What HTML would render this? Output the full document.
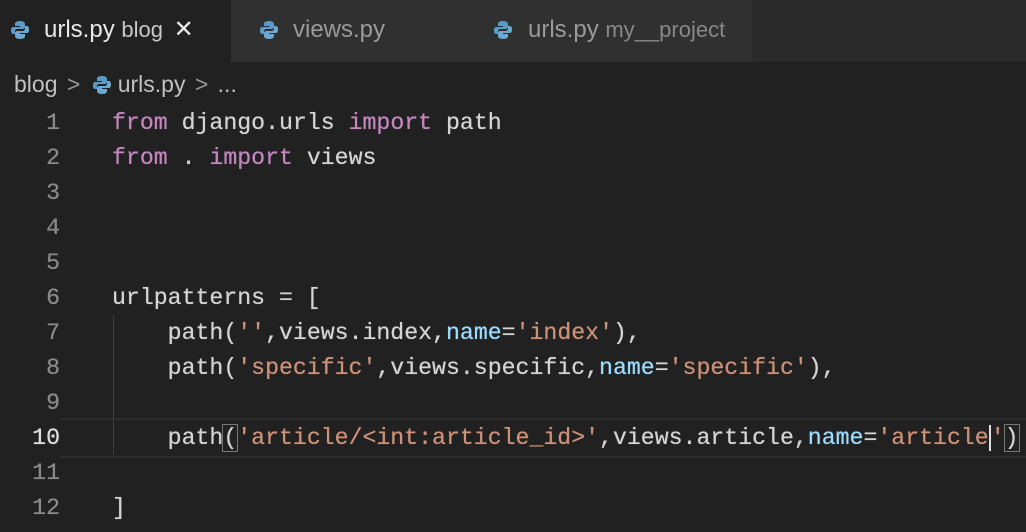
<!DOCTYPE html>
<html><head><style>
body{margin:0;width:1026px;height:532px;background:#212121;overflow:hidden;font-family:"Liberation Sans",sans-serif;position:relative}
.tabs{position:absolute;top:0;left:0;width:1026px;height:62px;background:#2a2a2a}
.tab{position:absolute;top:0;height:62px;background:#303030;color:#9a9a9a;font-size:24px;line-height:60px;border-right:1px solid #272727}
.tab.act{background:#212121;color:#e8e8e8}
.ic{position:absolute;top:20px;width:20px;height:20px}
.crumb{position:absolute;top:66px;left:14px;color:#c0c0c0;font-size:23px;line-height:36px;word-spacing:3px}
.code{position:absolute;top:110px;left:0;font-family:"Liberation Mono",monospace;font-size:23.2px;color:#d4d4d4;text-shadow:0 0 0.6px currentColor}
.ln{position:absolute;left:0;width:60px;text-align:right;color:#8a8a8a}
.l{position:absolute;left:112px;white-space:pre}
.k{color:#c586c0}.s{color:#ce9178}.n{color:#9cdcfe}
.hl{position:absolute;left:60px;top:418px;width:966px;height:36px;border-top:2px solid #2c2c2c;border-bottom:2px solid #2c2c2c}
.guide{position:absolute;left:113px;top:315px;width:1px;height:140px;background:#3e3e3e}
</style></head><body>
<svg width="0" height="0" style="position:absolute"><defs><g id="py"><path d="M10 1C6 1 5 2.5 5 4v2h5v1H3C1.5 7 1 8.5 1 10.5S1.7 14 3 14h2v-2.5C5 10 6 9 7.5 9h5C14 9 15 8 15 6.5V4C15 2.5 13.5 1 10 1z" fill="#5a9bc7"/><path d="M10 19c4 0 5-1.5 5-3v-2h-5v-1h7c1.5 0 2-1.5 2-3.5S18.3 6 17 6h-2v2.5C15 10 14 11 12.5 11h-5C6 11 5 12 5 13.5V16c0 1.5 1.5 3 5 3z" fill="#6aaad3"/></g></defs></svg>
<div class="tabs">
<div class="tab act" style="left:0;width:231px"><svg class="ic" style="left:10px" viewBox="0 0 20 20"><use href="#py"/></svg><span style="position:absolute;left:44px">urls.py <span style="font-size:22px;color:#c8c8c8">blog</span> <span style="font-size:24px;margin-left:4px">✕</span></span></div>
<div class="tab" style="left:231px;width:231px"><svg class="ic" style="left:28px" viewBox="0 0 20 20"><use href="#py"/></svg><span style="position:absolute;left:62px">views.py</span></div>
<div class="tab" style="left:462px;width:290px"><svg class="ic" style="left:31px" viewBox="0 0 20 20"><use href="#py"/></svg><span style="position:absolute;left:66px">urls.py <span style="font-size:22px;color:#888">my__project</span></span></div>
</div>
<div class="crumb">blog <span style="color:#999">&gt;</span> <svg width="20" height="20" viewBox="0 0 20 20" style="vertical-align:-3px;margin:0 6px 0 2px"><use href="#py"/></svg>urls.py <span style="color:#999">&gt;</span> ...</div>
<div class="hl"></div>
<div class="guide"></div>
<div class="code">
<div class="ln" style="top:0">1</div><div class="l" style="top:0"><span class="k">from</span> django.urls <span class="k">import</span> path</div>
<div class="ln" style="top:35px">2</div><div class="l" style="top:35px"><span class="k">from</span> . <span class="k">import</span> views</div>
<div class="ln" style="top:70px">3</div>
<div class="ln" style="top:105px">4</div>
<div class="ln" style="top:140px">5</div>
<div class="ln" style="top:175px">6</div><div class="l" style="top:175px">urlpatterns = [</div>
<div class="ln" style="top:210px">7</div><div class="l" style="top:210px">    path(<span class="s">''</span>,views.index,<span class="n">name</span>=<span class="s">'index'</span>),</div>
<div class="ln" style="top:245px">8</div><div class="l" style="top:245px">    path(<span class="s">'specific'</span>,views.specific,<span class="n">name</span>=<span class="s">'specific'</span>),</div>
<div class="ln" style="top:280px">9</div>
<div class="ln" style="top:315px;color:#e0e0e0">10</div><div class="l" style="top:315px">    path<span style="outline:1px solid #777">(</span><span class="s">'article/&lt;int:article_id&gt;'</span>,views.article,<span class="n">name</span>=<span class="s">'article</span><span style="border-left:2px solid #ddd" class="s">'</span><span style="outline:1px solid #777">)</span></div>
<div class="ln" style="top:350px">11</div>
<div class="ln" style="top:385px">12</div><div class="l" style="top:385px">]</div>
</div>
</body></html>
